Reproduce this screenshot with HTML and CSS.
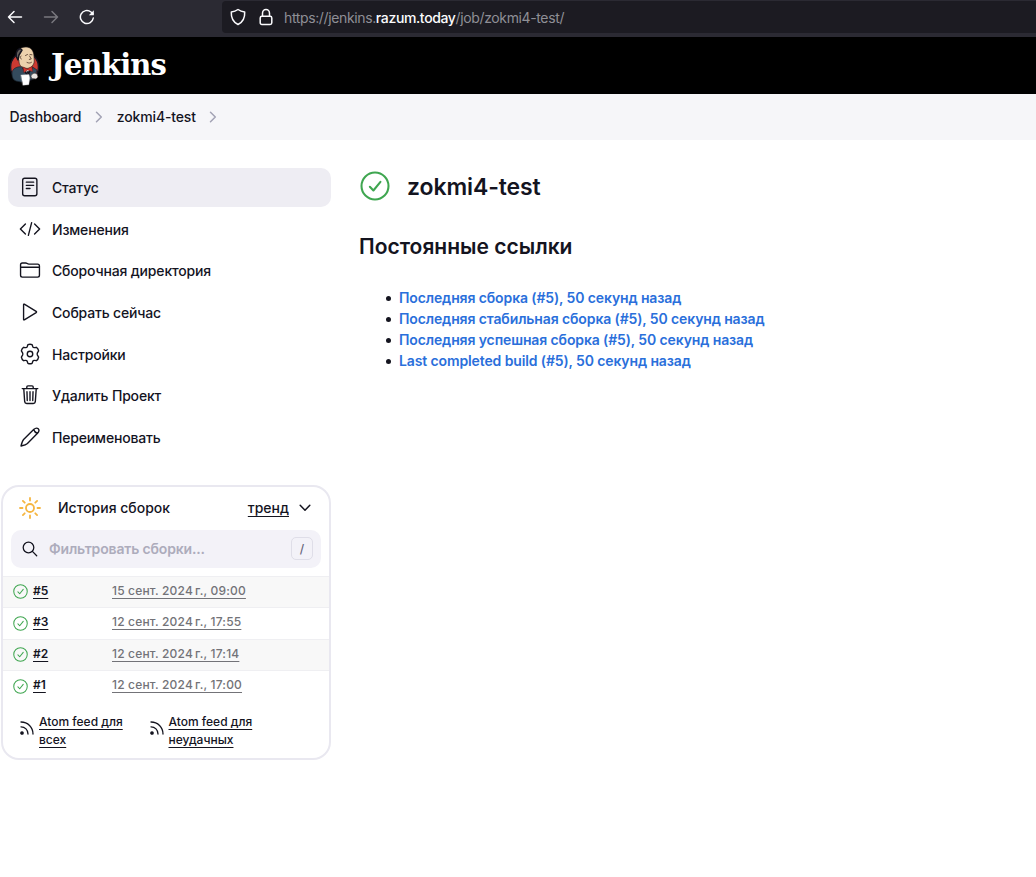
FILE: index.html
```html
<!DOCTYPE html>
<html lang="ru">
<head>
<meta charset="utf-8">
<title>zokmi4-test [Jenkins]</title>
<link rel="stylesheet" href="styles.css">
</head>
<body>
<svg class="defs" width="0" height="0">
  <symbol id="ok" viewBox="0 0 32 32"><circle cx="16" cy="16" r="14.4"/><path d="M10.500 16.800l3.800 4 7.500-9.300"/></symbol>
  <symbol id="rss" viewBox="0 0 14 14"><circle cx="2" cy="12" r="1.200" fill="#14141f"/><path d="M1 5.800c4 0 7 3.200 7 7.200M1 1c6.800 0 12 5.200 12 12"/></symbol>
  <symbol id="crumb" viewBox="0 0 8 12"><path d="M1.500 1.200L6.300 6l-4.800 4.800"/></symbol>
</svg>
<div class="browser">
  <div class="nav">
    <svg width="16" height="16" viewBox="0 0 16 16"><path d="M14.500 8H1.500M7 2.500L1.500 8 7 13.500"/></svg>
    <svg class="off" width="16" height="16" viewBox="0 0 16 16"><path d="M1.500 8h13M9 2.500L14.500 8 9 13.500"/></svg>
    <svg width="16" height="16" viewBox="0 0 16 16"><path d="M14.300 9A6.500 6.500 0 1 1 12 3l2 1.800"/><path d="M14.800 1.200v5H9.800z" fill="#fbfbfe" stroke="none"/></svg>
  </div>
  <div class="address">
    <svg width="16" height="18" viewBox="0 0 16 18"><path d="M8 1.500c2.100 1.500 4.300 2.200 6.700 2.500C15 9.500 12.500 14.300 8 16.500 3.500 14.300 1 9.500 1.300 4 3.700 3.700 5.900 3 8 1.500z"/></svg>
    <svg class="lock" width="14" height="18" viewBox="0 0 14 18"><rect x="1.200" y="8.200" width="11.600" height="8.200" rx="1.700"/><path d="M3.500 8V5.300a3.500 3.900 0 0 1 7 0V8"/></svg>
    <span class="url">https://jenkins.<b>razum.today</b>/job/zokmi4-test/</span>
  </div>
</div>
<header class="header">
  <svg class="butler" width="30" height="40" viewBox="0 0 30 40">
    <ellipse cx="14.500" cy="21" rx="14" ry="14.500" fill="#cd3a32"/>
    <path d="M8 21c-4 1-6 3-6 7 0 3 1 6 4 7l5 1 13-3 3-9-6-4z" fill="#344b5d" stroke="#17222c" stroke-width=".7"/>
    <path d="M13 22l4 7 5-7z" fill="#f0efed"/>
    <path d="M7 11C6 5 10 1 16 1c5 0 8 4 8 10 0 3 1 5-1 8-2 3-5 4-8 3-5-1-6-4-6-7z" fill="#edd2ad" stroke="#201b1b" stroke-width=".6"/>
    <path d="M10 2.500C7 4 5.500 7 6.500 11l1.500 3 1-5 3-5z" fill="#66605c"/>
    <path d="M15.500 9.500l2-1M20 8.500l2 .3M19.500 10l1.800 3-2 .4M17 16.500c2 1 3.500.5 4.500-.2M11 10c-1 1-1 2.500.3 3" fill="none" stroke="#4d352a" stroke-width=".8"/>
    <path d="M13 21l4 2 5-2.500.5 5-5-1.500-3.500 2.500z" fill="#d6352d" stroke="#691e1c" stroke-width=".5"/>
    <path d="M17 26l1.500 0 .5 3-2 1z" fill="#71879a"/>
    <path d="M11 29l8-.6.800 3.600-1 6.700-5.800.5z" fill="#fff" stroke="#bbb" stroke-width=".4"/>
    <path d="M21 30c1-3 4-3.500 6-2l1 3-2 2-4-.5z" fill="#e8e5e1" stroke="#493d3a" stroke-width=".6"/>
  </svg>
  <span class="brand">Jenkins</span>
</header>
<nav class="crumbs">
  <span>Dashboard</span><svg class="sep" width="8" height="12"><use href="#crumb"/></svg>
  <span>zokmi4-test</span><svg class="sep" width="8" height="12"><use href="#crumb"/></svg>
</nav>
<div class="page">
  <aside class="side">
    <div class="tasks">
      <a class="task active"><svg viewBox="0 0 24 24"><rect x="4" y="2.500" width="15.500" height="19" rx="2.200"/><path d="M8 6.700h8M8 10.200h8M8 13.700h4"/></svg><span>Статус</span></a>
      <a class="task"><svg viewBox="0 0 24 24"><path d="M7 6.500L1.500 12 7 17.500M17 6.500l5.500 5.500-5.500 5.500M13.800 5l-3.600 14"/></svg><span>Изменения</span></a>
      <a class="task"><svg viewBox="0 0 24 24"><path d="M1.700 9.200V6.300q0-2 2-2h3.500q1 0 1.800.6.800.7 1.800.7h9.500q2 0 2 2v1.600M1.700 9h20.600v8.800q0 2-2 2H3.700q-2 0-2-2z"/></svg><span>Сборочная директория</span></a>
      <a class="task"><svg viewBox="0 0 24 24"><path d="M5 3.900v16.200q0 .8.800.4l12.900-7.800q.9-.7 0-1.400L5.800 3.500Q5 3.100 5 3.900z"/></svg><span>Собрать сейчас</span></a>
      <a class="task"><svg viewBox="0 0 24 24"><circle cx="12" cy="12" r="3"/><path d="M9.700 1.900q2.300-1 4.600 0l.8 2.300q.5.900 1.600.8l2.300-.3q2 1.500 2.400 4l-1.300 2.100q-.6 1.200 0 2.400l1.300 2.100q-.4 2.500-2.400 4l-2.300-.3q-1.100-.1-1.600.8l-.8 2.300q-2.300 1-4.600 0l-.8-2.300q-.5-.9-1.600-.8l-2.300.3q-2-1.500-2.400-4l1.300-2.100q.6-1.200 0-2.400L2.600 8.700q.4-2.500 2.400-4l2.300.3q1.100.1 1.600-.8z"/></svg><span>Настройки</span></a>
      <a class="task"><svg viewBox="0 0 24 24"><path d="M3.500 5h17M5.200 5l1 14.300q.2 2 2.200 2h7.200q2 0 2.200-2l1-14.300M8.500 5V3.300q0-1.300 1.300-1.300h4.400q1.300 0 1.300 1.300V5M12 8.500V18M8.700 8.500L9 18M15.300 8.500L15 18"/></svg><span>Удалить Проект</span></a>
      <a class="task"><svg viewBox="0 0 24 24"><path d="M16 3.800L5 14.800Q3.600 16.300 2.200 21.800 7.700 20.400 9.200 19l11-11q2.700-3 .8-4.900-2-1.900-5 .7zM16 3.800q1 3.300 4.200 4.200"/></svg><span>Переименовать</span></a>
    </div>
    <section class="history">
      <div class="hist-head">
        <svg class="sun" width="22" height="22" viewBox="0 0 22 22"><circle cx="11" cy="11" r="4"/><path d="M11 1v2.500M11 18.500V21M1 11h2.500M18.500 11H21M3.900 3.900l1.800 1.800M16.300 16.300l1.800 1.800M3.900 18.100l1.800-1.800M16.300 5.700l1.800-1.800"/></svg>
        <span class="hist-title">История сборок</span>
        <a class="trend">тренд</a>
        <svg width="12" height="8" viewBox="0 0 12 8"><path d="M1.200 1.200L6 6.200l4.800-5"/></svg>
      </div>
      <div class="search">
        <svg width="16" height="16" viewBox="0 0 16 16"><circle cx="6.500" cy="6.500" r="5.300"/><path d="M10.400 10.400l4.300 4.300"/></svg>
        <span class="ph">Фильтровать сборки...</span>
        <kbd class="key">/</kbd>
      </div>
      <div class="builds">
        <div class="build"><svg class="ok"><use href="#ok"/></svg><a class="num">#5</a><a class="date">15 сент. 2024&#8239;г., 09:00</a></div>
        <div class="build"><svg class="ok"><use href="#ok"/></svg><a class="num">#3</a><a class="date">12 сент. 2024&#8239;г., 17:55</a></div>
        <div class="build"><svg class="ok"><use href="#ok"/></svg><a class="num">#2</a><a class="date">12 сент. 2024&#8239;г., 17:14</a></div>
        <div class="build"><svg class="ok"><use href="#ok"/></svg><a class="num">#1</a><a class="date">12 сент. 2024&#8239;г., 17:00</a></div>
      </div>
      <div class="feeds">
        <div class="feed"><svg width="14" height="14"><use href="#rss"/></svg><a>Atom feed для<br>всех</a></div>
        <div class="feed"><svg width="14" height="14"><use href="#rss"/></svg><a>Atom feed для<br>неудачных</a></div>
      </div>
    </section>
  </aside>
  <main class="main">
    <div class="title"><svg class="ok big"><use href="#ok"/></svg><h1>zokmi4-test</h1></div>
    <h2>Постоянные ссылки</h2>
    <ul class="links">
      <li><a>Последняя сборка (#5), 50 секунд назад</a></li>
      <li><a>Последняя стабильная сборка (#5), 50 секунд назад</a></li>
      <li><a>Последняя успешная сборка (#5), 50 секунд назад</a></li>
      <li><a>Last completed build (#5), 50 секунд назад</a></li>
    </ul>
  </main>
</div>
</body>
</html>
```

FILE: styles.css
```css
* { box-sizing: border-box; }
body { margin: 0; background: #fff; color: #14141f; font: 500 14px/20px Inter, "Liberation Sans", sans-serif; height: 877px; overflow: hidden; }
svg { fill: none; stroke: currentColor; stroke-width: 1.5; stroke-linecap: round; stroke-linejoin: round; flex: none; display: block; }
.defs { position: absolute; }
h1, h2, ul { margin: 0; padding: 0; }

.browser { height: 37px; background: #2b2a33; display: flex; color: #fbfbfe; }
.nav { width: 222px; display: flex; gap: 20px; padding: 9px 0 0 7px; }
.nav .off { color: #79787f; }
.address { flex: 1; height: 32px; margin-top: 1px; background: #1c1b22; border-radius: 4px 0 0 4px; display: flex; align-items: center; padding-left: 8px; }
.lock { margin: 0 11px 0 13px; }
.url { color: #8f8f96; font-weight: 400; letter-spacing: -.37px; padding-top: 2px; }
.url b { color: #fbfbfe; font-weight: 500; }

.header { height: 57px; background: #000; display: flex; padding: 9px 0 0 10px; }
.brand { color: #fff; font: bold 29px/38px "DejaVu Serif", serif; letter-spacing: -1px; margin-left: 11px; }

.crumbs { height: 46px; background: #f6f6f9; display: flex; align-items: center; padding-left: 9.500px; letter-spacing: -.14px; }
.sep { color: #a3a3b5; margin: 0 14px 0 13.500px; }

.page { display: flex; }
.side { width: 331px; padding-top: 28px; }
.tasks { display: flex; flex-direction: column; gap: 3px; padding-left: 8px; }
.task { height: 38.700px; border-radius: 10px; display: flex; align-items: center; padding-left: 11px; letter-spacing: -.17px; }
.task.active { background: #eeedf3; }
.task svg { width: 22px; height: 22px; margin: -1px 11px 0 0; }
.task span { padding-top: 1px; }

.history { margin: 28px 0 0 1px; height: 275px; border: 2px solid #e9e8f0; border-radius: 18px; }
.hist-head { height: 43px; display: flex; align-items: center; padding: 0 18px 1px 16px; }
.sun { color: #f5b642; stroke-width: 1.8; }
.hist-title { margin-left: 17px; flex: 1; }
.trend { text-decoration: underline; text-underline-offset: 3px; margin-right: 10px; }
.search { height: 38px; margin: 0 8px 8px 8px; border-radius: 10px; background: #f3f2f8; display: flex; align-items: center; padding: 0 8px 0 11px; }
.search svg { stroke-width: 1.3; }
.ph { margin-left: 11px; flex: 1; color: #adacbc; font-weight: 600; letter-spacing: -.16px; }
.key { width: 22px; height: 23px; border: 1px solid #dfdee8; border-radius: 5px; font: 500 12px/21px Inter, sans-serif; text-align: center; color: #65647a; }
.build { height: 31.500px; display: flex; align-items: center; padding-left: 10px; border-top: 1px solid #efeff2; }
.build:nth-child(odd) { background: #f8f8f8; }
.ok { width: 15px; height: 15px; color: #3fa650; stroke-width: 2.200; }
.build .ok { margin-top: -1px; }
.num { width: 79px; margin: -3px 0 0 5px; font-size: 12px; font-weight: 600; text-decoration: underline; text-underline-offset: 3px; }
.date { margin-top: -3px; font-size: 12px; color: #737378; text-decoration: underline; text-underline-offset: 3px; letter-spacing: .17px; }
.feeds { display: flex; padding: 11px 0 0 17px; font-size: 12px; line-height: 18px; }
.feed { width: 129.500px; display: flex; align-items: center; gap: 5px; }
.feed svg { stroke-width: 1.300; margin-top: -6px; }
.feed a { text-decoration: underline; text-underline-offset: 3px; }

.main { padding: 30px 0 0 28px; }
.title { display: flex; align-items: center; gap: 17px; height: 32px; padding-left: 1px; }
.ok.big { width: 30px; height: 30px; }
h1 { font-size: 23px; line-height: 32px; font-weight: 600; padding-top: 1px; letter-spacing: -.1px; }
h2 { font-size: 21px; line-height: 30px; font-weight: 600; margin-top: 30px; }
.links { margin-top: 25px; padding-left: 27px; line-height: 21px; list-style: none; }
.links li { display: flex; align-items: center; gap: 8px; }
.links li::before { content: ""; width: 5px; height: 5px; border-radius: 50%; background: #14141f; margin-top: 2px; }
.links a { color: #2a6fdb; font-weight: 600; letter-spacing: -.12px; }
```
